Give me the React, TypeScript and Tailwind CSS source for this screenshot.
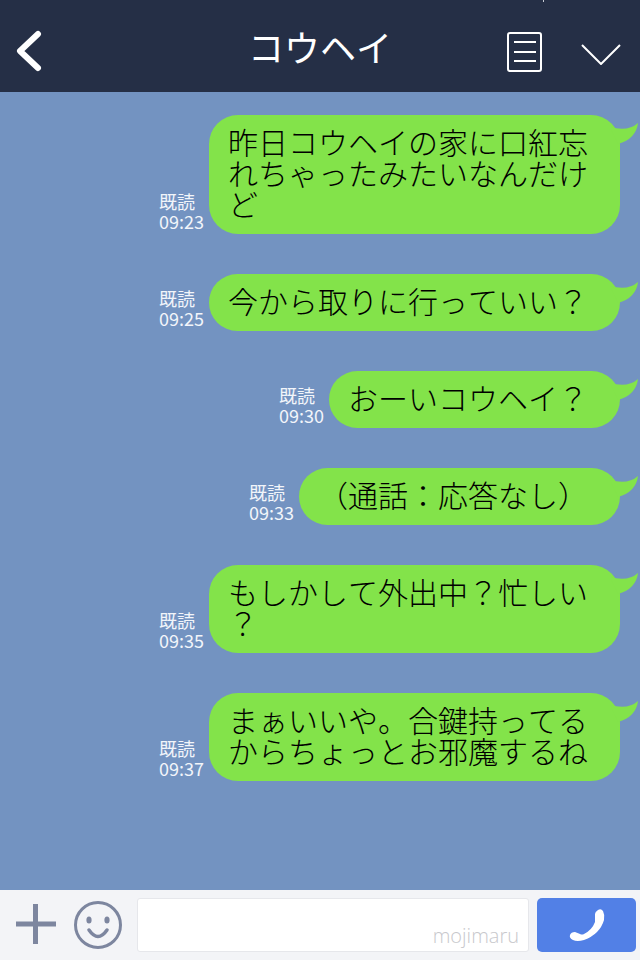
const messages = [
  { time: '09:23', text: '昨日コウヘイの家に口紅忘れちゃったみたいなんだけど' },
  { time: '09:25', text: '今から取りに行っていい？' },
  { time: '09:30', text: 'おーいコウヘイ？' },
  { time: '09:33', text: '（通話：応答なし）' },
  { time: '09:35', text: 'もしかして外出中？忙しい？' },
  { time: '09:37', text: 'まぁいいや。合鍵持ってるからちょっとお邪魔するね' },
];

const cjk = "font-['Noto_Sans_CJK_JP',sans-serif] [font-kerning:none]";

function Bubble({ time, text }: { time: string; text: string }) {
  return (
    <div className="flex items-end justify-end">
      <div className={`mr-[5px] mb-[3px] text-[18px] leading-[20px] text-[#f2f5fa] ${cjk}`}>
        <div>既読</div>
        <div>{time}</div>
      </div>
      <div
        className={`relative max-w-[411px] rounded-[29px] bg-[#83e34a] pt-[11px] pb-[15px] pl-[19px] pr-[32px] text-[30px] leading-[31px] font-light text-black [line-break:anywhere] [text-spacing-trim:space-all] ${cjk}`}
      >
        {text}
        {/* しっぽ */}
        <svg className="absolute right-[-20px] top-0 overflow-visible" width="28" height="30" viewBox="-8 0 28 30">
          <path d="M-10 12 Q8 17 18 8 Q16 24 -2 29 Z" fill="#83e34a" />
        </svg>
      </div>
    </div>
  );
}

export default function App() {
  return (
    <div className="flex h-[960px] w-[640px] flex-col overflow-hidden bg-[#7393c1]">
      <header className="relative flex h-[92px] shrink-0 items-center justify-center bg-[#252f46]">
        <span className="absolute left-[543px] top-0 h-[2px] w-[1px] bg-[#c8ccd4]" />
        <svg className="absolute left-[15px] top-[30px]" width="28" height="42" viewBox="0 0 28 42" fill="none">
          <path d="M23 4 L5 21 L23 38" stroke="#fff" strokeWidth="6" strokeLinecap="round" strokeLinejoin="round" />
        </svg>
        <h1 className={`text-[36px] leading-[44px] text-white ${cjk}`}>コウヘイ</h1>
        <svg className="absolute left-[507px] top-[32px]" width="35" height="40" viewBox="0 0 35 40" fill="none" stroke="#fff">
          <rect x="1" y="1" width="33" height="38" rx="2" strokeWidth="2" />
          <path d="M7 10 H29 M7 20 H29 M7 29 H29" strokeWidth="2" />
        </svg>
        <svg className="absolute left-[581px] top-[44px]" width="40" height="21" viewBox="0 0 40 21" fill="none">
          <path d="M1 1 L20 20 L39 1" stroke="#fff" strokeWidth="2" />
        </svg>
      </header>

      <main className="flex flex-1 flex-col gap-10 pt-[23px] pr-5">
        {messages.map((m) => (
          <Bubble key={m.time} time={m.time} text={m.text} />
        ))}
      </main>

      <footer className="flex h-[70px] shrink-0 items-center bg-[#f3f4f7] pl-[15px] pr-1">
        <svg width="42" height="40" viewBox="0 0 42 40" className="mb-[2px] shrink-0">
          <path d="M1 20 H41 M20.5 0 V40" stroke="#7d869f" strokeWidth="5" />
        </svg>
        <svg width="50" height="50" viewBox="0 0 50 50" fill="none" className="ml-[16px] shrink-0">
          <circle cx="25" cy="25" r="22.5" stroke="#7d869f" strokeWidth="3" />
          <ellipse cx="16" cy="20" rx="2.6" ry="3.6" fill="#7d869f" />
          <ellipse cx="34" cy="20" rx="2.6" ry="3.6" fill="#7d869f" />
          <path d="M16 30 Q25 43 34 30" stroke="#7d869f" strokeWidth="3.5" strokeLinecap="round" />
        </svg>
        <div className="ml-[14px] flex h-[54px] w-[392px] shrink-0 items-end justify-end rounded-[3px] border border-[#e6e7eb] bg-white pr-[9px] pb-[1px]">
          <span className="font-['Open_Sans',sans-serif] text-[20px] leading-[28px] font-light text-[#c8c8cc]">mojimaru</span>
        </div>
        <div className="ml-[8px] flex h-[54px] w-[99px] shrink-0 items-center justify-center rounded-[5px] bg-[#5280e6]">
          <svg width="38" height="36" viewBox="0 0 38 36">
            <path
              d="M30 3 Q33 1 35 4 Q37 8 36 13 Q32 27 16 33 Q9 35 5 33 Q1 31 2 28 Q3 25 7 25 L12 27 Q14 28 16 27 Q24 23 27 15 Q27 13 27 12 L27 7 Q27 5 30 3 Z"
              fill="#fff"
            />
          </svg>
        </div>
      </footer>
    </div>
  );
}
